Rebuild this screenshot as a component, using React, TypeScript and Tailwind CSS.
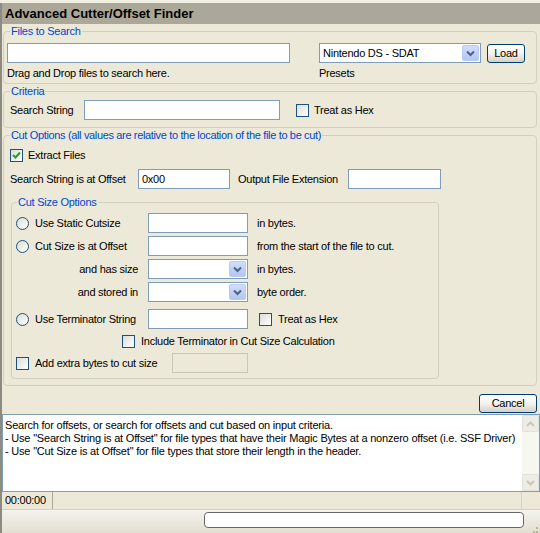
import React from "react";

function TextBox({ className = "", value = "", disabled = false }: { className?: string; value?: string; disabled?: boolean }) {
  return (
    <div
      className={`h-[20px] flex items-center px-[3px] border ${
        disabled ? "border-[#c9c7ba] bg-[#ece9d8]" : "border-[#7f9db9] bg-white"
      } ${className}`}
    >
      {value}
    </div>
  );
}

function Combo({ className = "", value = "" }: { className?: string; value?: string }) {
  return (
    <div className={`h-[20px] flex items-center border border-[#7f9db9] bg-white pl-[3px] pr-[1px] ${className}`}>
      <span className="flex-1">{value}</span>
      <span className="w-[17px] h-[16px] rounded-[2px] border border-[#b9cbf3] bg-linear-to-b from-[#d1defc] to-[#b2c6f3] flex items-center justify-center">
        <svg width="9" height="7" viewBox="0 0 9 7">
          <path d="M1 1.5 L4.5 5 L8 1.5" fill="none" stroke="#4d6185" strokeWidth="2" />
        </svg>
      </span>
    </div>
  );
}

function Check({ checked = false, className = "" }: { checked?: boolean; className?: string }) {
  return (
    <span
      className={`w-[13px] h-[13px] shrink-0 border border-[#1c5180] bg-linear-to-br from-[#dcdcd7] to-white flex items-center justify-center ${className}`}
    >
      {checked && (
        <svg width="9" height="9" viewBox="0 0 9 9">
          <path d="M1 4 L3.5 6.5 L8 1.5" fill="none" stroke="#21a121" strokeWidth="2" />
        </svg>
      )}
    </span>
  );
}

function Radio() {
  return (
    <span className="w-[13px] h-[13px] shrink-0 rounded-full border border-[#1c5180] bg-linear-to-br from-[#dcdcd7] to-white" />
  );
}

function XpButton({ label, className = "" }: { label: string; className?: string }) {
  return (
    <div
      className={`h-[19px] rounded-[3px] border border-[#003c74] bg-linear-to-b from-white via-[#f4f3ee] to-[#d6d0c5] flex items-center justify-center ${className}`}
    >
      {label}
    </div>
  );
}

function Legend({ children, className = "" }: { children: React.ReactNode; className?: string }) {
  return <legend className={`px-[1px] text-[#0046d5] ${className}`}>{children}</legend>;
}

export default function App() {
  return (
    <div className="w-[540px] h-[533px] overflow-hidden bg-[#ece9d8] text-[11px] leading-[13px] tracking-[-0.25px] text-black font-['Liberation_Sans',Arial,sans-serif] flex flex-col">
      <div className="h-[3px] bg-[#f1efe2]" />
      <div className="flex-1 flex flex-col border-l-2 border-[#8d8b80]">
        <div className="h-[21px] bg-[#aca899] flex items-center pl-[3px] text-[13px] font-bold tracking-normal">
          Advanced Cutter/Offset Finder
        </div>

        {/* Files to Search */}
        <fieldset className="ml-[1px] mr-[3px] mt-[1px] border border-[#d0d0bf] rounded-[4px] px-[3px] pb-[3px]">
          <Legend className="ml-[3px]">Files to Search</Legend>
          <div className="mt-[5px] flex">
            <div className="w-[283px]">
              <TextBox />
              <div className="mt-[4px]">Drag and Drop files to search here.</div>
            </div>
            <div className="ml-[29px]">
              <div className="flex items-start">
                <Combo className="w-[162px]" value="Nintendo DS - SDAT" />
                <XpButton label="Load" className="ml-[6px] mt-[1px] w-[38px]" />
              </div>
              <div className="mt-[4px]">Presets</div>
            </div>
          </div>
        </fieldset>

        {/* Criteria */}
        <fieldset className="ml-[1px] mr-[3px] mt-[1px] border border-[#d0d0bf] rounded-[4px] px-[3px] pb-[7px]">
          <Legend className="ml-[3px]">Criteria</Legend>
          <div className="mt-[2px] flex items-center pl-[3px]">
            <span className="w-[74px]">Search String</span>
            <TextBox className="w-[196px]" />
            <Check className="ml-[16px]" />
            <span className="ml-[5px]">Treat as Hex</span>
          </div>
        </fieldset>

        {/* Cut Options */}
        <fieldset className="ml-[1px] mr-[3px] mt-[1px] border border-[#d0d0bf] rounded-[4px] px-[3px] pb-[6px]">
          <Legend className="ml-[3px] tracking-[-0.35px]">
            Cut Options (all values are relative to the location of the file to be cut)
          </Legend>
          <div className="mt-[7px] flex items-center pl-[3px]">
            <Check checked />
            <span className="ml-[5px]">Extract Files</span>
          </div>
          <div className="mt-[7px] flex items-center pl-[3px]">
            <span className="w-[128px]">Search String is at Offset</span>
            <TextBox className="w-[92px]" value="0x00" />
            <span className="ml-[8px] w-[110px]">Output File Extension</span>
            <TextBox className="w-[93px]" />
          </div>

          <fieldset className="ml-[4px] mt-[7px] w-[428px] border border-[#d0d0bf] rounded-[4px] pl-[4px] pb-[5px]">
            <Legend className="ml-[1px]">Cut Size Options</Legend>
            <div className="mt-[4px] flex flex-col gap-[3px]">
              <div className="flex items-center h-[20px]">
                <span className="w-[132px] flex items-center">
                  <Radio />
                  <span className="ml-[6px]">Use Static Cutsize</span>
                </span>
                <TextBox className="w-[100px]" />
                <span className="ml-[9px]">in bytes.</span>
              </div>
              <div className="flex items-center h-[20px]">
                <span className="w-[132px] flex items-center">
                  <Radio />
                  <span className="ml-[6px]">Cut Size is at Offset</span>
                </span>
                <TextBox className="w-[100px]" />
                <span className="ml-[9px]">from the start of the file to cut.</span>
              </div>
              <div className="flex items-center h-[20px]">
                <span className="w-[132px] pr-[10px] text-right">and has size</span>
                <Combo className="w-[100px]" />
                <span className="ml-[9px]">in bytes.</span>
              </div>
              <div className="flex items-center h-[20px]">
                <span className="w-[132px] pr-[10px] text-right">and stored in</span>
                <Combo className="w-[100px]" />
                <span className="ml-[9px]">byte order.</span>
              </div>
            </div>
            <div className="mt-[7px] flex items-center h-[20px]">
              <span className="w-[132px] flex items-center">
                <Radio />
                <span className="ml-[6px]">Use Terminator String</span>
              </span>
              <TextBox className="w-[100px]" />
              <Check className="ml-[11px]" />
              <span className="ml-[6px]">Treat as Hex</span>
            </div>
            <div className="mt-[2px] flex items-center h-[20px] pl-[106px]">
              <Check />
              <span className="ml-[6px]">Include Terminator in Cut Size Calculation</span>
            </div>
            <div className="mt-[2px] flex items-center h-[20px]">
              <Check />
              <span className="ml-[6px] w-[137px]">Add extra bytes to cut size</span>
              <TextBox className="w-[76px]" disabled />
            </div>
          </fieldset>
        </fieldset>

        <div className="mt-[8px] flex justify-end pr-[3px]">
          <XpButton label="Cancel" className="w-[58px]" />
        </div>

        {/* Output */}
        <div className="mt-[1px] h-[78px] border border-[#7f9db9] bg-white flex">
          <div className="flex-1 pl-[2px] pt-[4px] leading-[13px] tracking-[-0.2px] whitespace-nowrap overflow-hidden">
            <div>Search for offsets, or search for offsets and cut based on input criteria.</div>
            <div>- Use "Search String is at Offset" for file types that have their Magic Bytes at a nonzero offset (i.e. SSF Driver)</div>
            <div>- Use "Cut Size is at Offset" for file types that store their length in the header.</div>
          </div>
          <div className="w-[17px] bg-[#f7f7f1] flex flex-col justify-between">
            <div className="h-[17px] rounded-[2px] border border-[#e3e2da] bg-[#eeede5] flex items-center justify-center">
              <svg width="9" height="6" viewBox="0 0 9 6">
                <path d="M1 5 L4.5 1.5 L8 5" fill="none" stroke="#c9c7ba" strokeWidth="2" />
              </svg>
            </div>
            <div className="h-[17px] rounded-[2px] border border-[#e3e2da] bg-[#eeede5] flex items-center justify-center">
              <svg width="9" height="6" viewBox="0 0 9 6">
                <path d="M1 1 L4.5 4.5 L8 1" fill="none" stroke="#c9c7ba" strokeWidth="2" />
              </svg>
            </div>
          </div>
        </div>

        {/* Status bar */}
        <div className="h-[18px] flex items-center border-b border-[#d6d2c2]">
          <div className="w-[51px] h-full flex items-center pl-[3px] border-r border-[#aca899]">00:00:00</div>
          <div className="flex-1 h-full border-r border-[#d6d2c2] mr-[18px]" />
        </div>
        <div className="flex-1 bg-linear-to-b from-[#f4f3ee] to-[#e2dfd1] flex items-start pt-[2px]">
          <div className="ml-auto w-[320px] h-[16px] rounded-[4px] border border-[#686868] bg-white" />
          <div className="w-[16px] self-end h-[12px] flex flex-wrap content-end justify-end pr-[2px] gap-[1px]">
            <span className="w-[2px] h-[2px] bg-[#b9b5a3]" />
            <span className="w-full" />
            <span className="w-[2px] h-[2px] bg-[#b9b5a3]" />
            <span className="w-[2px] h-[2px] bg-[#b9b5a3]" />
          </div>
        </div>
      </div>
    </div>
  );
}
